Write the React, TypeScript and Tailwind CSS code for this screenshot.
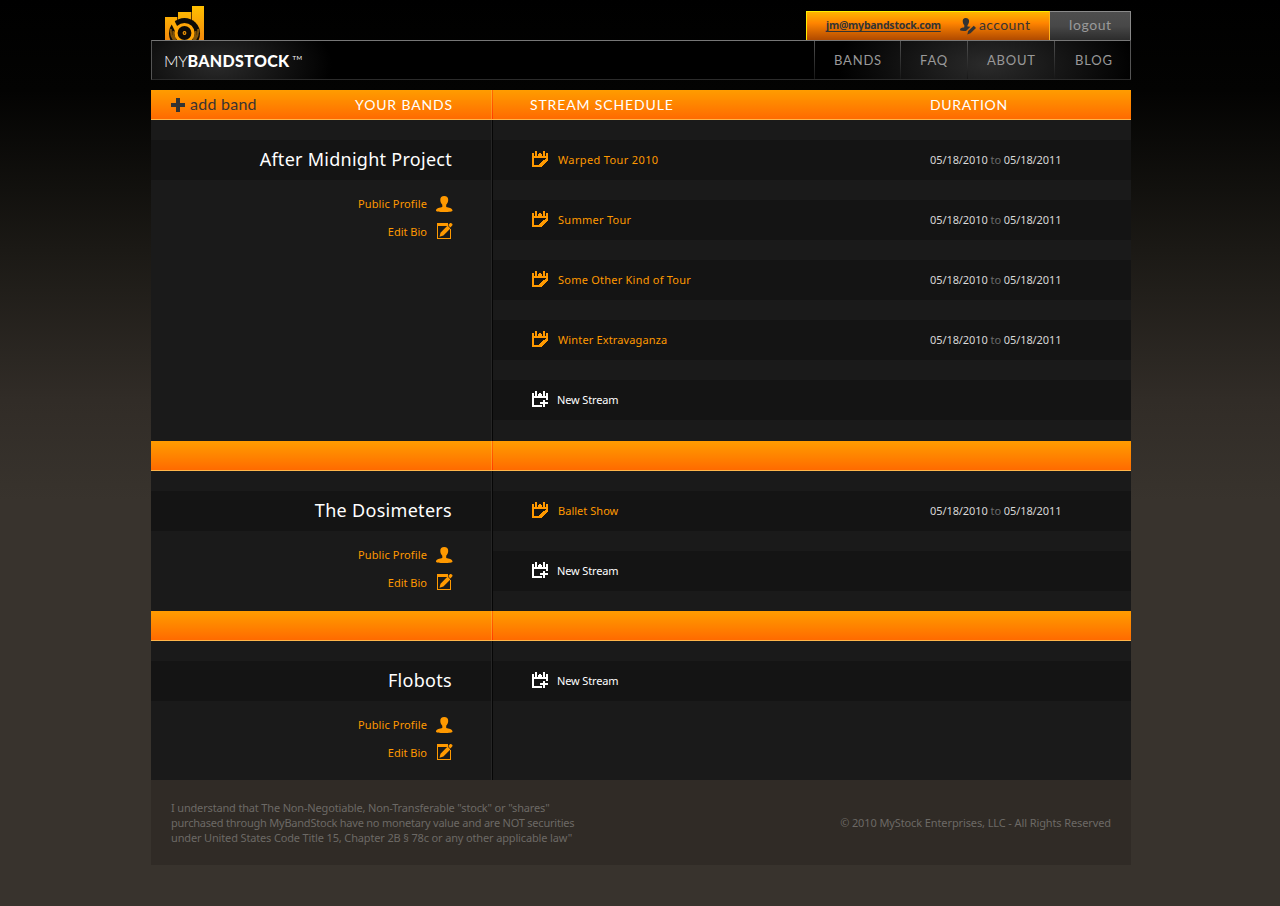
import type { ReactNode } from "react";

const brand = "font-['Lato',sans-serif]";

function Logo() {
  return (
    <svg width="40" height="34" viewBox="0 0 40 34" className="block">
      <defs>
        <linearGradient id="bars" x1="0" y1="0" x2="0" y2="1">
          <stop offset="0" stopColor="#ffc000" />
          <stop offset="1" stopColor="#f58a0c" />
        </linearGradient>
        <clipPath id="barClip">
          <path d="M0 11h12.500V6h13V0H39V34H0z" />
        </clipPath>
      </defs>
      <path d="M0 11h12v23H0zM13 6h13v28H13zM27 0h12v34H27z" fill="url(#bars)" />
      <path d="M12 11h1v23h-1zM26 6h1v28h-1z" fill="#5a3500" />
      <g clipPath="url(#barClip)">
        <circle cx="19.500" cy="27.500" r="15.500" fill="#0d0a06" />
        <path d="M6 23a14 14 0 0 0 3 11M8.500 25a11.500 11.500 0 0 0 2.500 9M33 23a14 14 0 0 1-3 11M30.500 25a11.500 11.500 0 0 1-2.500 9" stroke="#7d520a" strokeWidth="2" fill="none" />
        <path d="M7 14.500l5 10" stroke="#ffab05" strokeWidth="4" />
        <circle cx="19.500" cy="27" r="8.500" fill="#0d0a06" stroke="#ffa506" strokeWidth="3.200" />
        <circle cx="19.500" cy="27" r="1.900" fill="#f79a08" />
        <circle cx="19.500" cy="27" r="0.800" fill="#0d0a06" />
      </g>
    </svg>
  );
}

function CalendarEdit() {
  return (
    <svg width="17" height="17" viewBox="0 0 17 17" shapeRendering="crispEdges" className="mb-[2px] block shrink-0 text-[#ff9900]" fill="currentColor">
      <path d="M0 2h2v3h4V3h4v2h4V2h2v5H0zM3 0h2v5H3zM11 0h2v5h-2zM7 2h2v1H7z" />
      <path d="M0 7h2v9H0zM2 14h5v2H2z" />
      <path d="M14 7h2v3h-1v1h-1v1h-1v1h-1v1h-1v1h-1v1H7v-3h1v-1h1v-1h1v-1h1V9h2V8h1z" />
    </svg>
  );
}

function CalendarAdd() {
  return (
    <svg width="17" height="17" viewBox="0 0 17 17" shapeRendering="crispEdges" className="mb-[2px] block shrink-0 text-white" fill="currentColor">
      <path d="M0 2h2v3h4V3h4v2h4V2h2v5H0zM3 0h2v5H3zM11 0h2v5h-2zM7 2h2v1H7z" />
      <path d="M0 7h2v9H0zM2 14h8v2H2zM14 7h2v2h-2z" />
      <path d="M11 9h2v2h3v2h-3v3h-2v-3H8v-2h3z" />
    </svg>
  );
}

function Person() {
  return (
    <svg width="17" height="17" viewBox="0 0 17 17" className="block shrink-0" fill="#ff9900">
      <path d="M8.200 0C5.600 0 4.200 1.500 4.300 4c.1 2.200.9 3.700 2 4.700V11C4 11.600 0 12 0 14.500 0 15.600 3 16 8.200 16s8.300-.4 8.300-1.500C16.500 12 12.500 11.600 10.200 11V8.700c1.100-1 1.900-2.500 2-4.700.1-2.500-1.400-4-4-4z" />
    </svg>
  );
}

function Compose() {
  return (
    <svg width="17" height="17" viewBox="0 0 17 17" className="mb-[2px] block shrink-0" fill="#ff9900">
      <path d="M1 0h11v3H2v12h12V6h1v10H1z" shapeRendering="crispEdges" />
      <path d="M11.600 2.600l2.800 2.800-7 7-3.900 1.300 1-3.900zM12.300 1.900l1.300-1.400c.8-.7 1.600-.6 2.300 0 .8.800.8 1.600.1 2.300l-1.100 1.300-.8.400z" />
    </svg>
  );
}

function AccountIcon() {
  return (
    <svg width="17" height="17" viewBox="0 0 17 17" className="block shrink-0" fill="#333">
      <path d="M5.700 0C3.500 0 2.600 1.300 2.700 3.300c.1 2 .8 3.100 1.600 3.900v2C2.500 9.800 0 9.800 0 12c0 .7 2.500 1 6 1l4.500-4.200-3-.3V7.200c.8-.8 1.500-2 1.600-3.900C9.200 1.300 8 0 5.700 0z" />
      <path d="M13.800 7.800l2.200 2.100-5.500 5.300-3.200 1.200.9-3.300z" />
    </svg>
  );
}

function Divider({ bright }: { bright?: boolean }) {
  return bright ? (
    <div className="flex w-[2px] shrink-0">
      <div className="w-px bg-linear-to-b from-[#ffad28] to-[#ff8a1c]" />
      <div className="w-px bg-linear-to-b from-[#ff6a00] to-[#ff3a00]" />
    </div>
  ) : (
    <div className="flex w-[2px] shrink-0">
      <div className="w-px bg-[#262626]" />
      <div className="w-px bg-[#060606]" />
    </div>
  );
}

function OrangeBar({ left, right }: { left?: ReactNode; right?: ReactNode }) {
  return (
    <div className="flex h-[30px] border-b border-[#ffb54a] bg-linear-to-b from-[#ff9c00] to-[#ff6a00]">
      <div className="flex w-[340px] items-center justify-between pr-[38px] pl-5">{left}</div>
      <Divider bright />
      <div className="flex flex-1 items-center pl-[37px]">{right}</div>
    </div>
  );
}

type Stream = { name: string; track: string };

function Band({ name, track, streams, height }: { name: string; track: string; streams: Stream[]; height: string }) {
  return (
    <section className={`flex bg-[#1a1a1a] ${height}`}>
      <div className="w-[340px] pt-5">
        <h2 className={`flex h-10 items-center justify-end bg-[#141414] pr-[39px] pb-[2px] text-[18px] text-white ${track}`}>{name}</h2>
        <div className="mt-[10px] flex flex-col items-end pr-[38px] text-[11px] tracking-[0.12px] text-[#ff9900]">
          <a className="flex h-7 items-center gap-[9px]">Public Profile<Person /></a>
          <a className="flex h-7 items-center gap-[9px] tracking-[0]">Edit Bio<Compose /></a>
        </div>
      </div>
      <Divider />
      <div className="flex-1 text-[11px]">
        {streams.map((s) => (
          <div key={s.name} className="mt-5 flex h-10 items-center bg-[#141414] pl-[39px]">
            <div className="flex w-[398px] items-center gap-[9px] text-[#ff9900]">
              <CalendarEdit />
              <span className={s.track}>{s.name}</span>
            </div>
            <span className="tracking-[-0.08px] text-[#d8d8d8]">
              05/18/2010 <span className="text-[#6a6a6a]">to</span> 05/18/2011
            </span>
          </div>
        ))}
        <div className="mt-5 flex h-10 items-center gap-[8px] bg-[#141414] pl-[39px] text-white">
          <CalendarAdd />
          <span className="tracking-[-0.15px]">New Stream</span>
        </div>
      </div>
    </section>
  );
}

const nav = [
  { label: "BANDS", box: "w-[86px] pl-[19px]" },
  { label: "FAQ", box: "w-[67px] pl-[19px]" },
  { label: "ABOUT", box: "w-[87px] pl-[19px]" },
  { label: "BLOG", box: "w-[76px] pl-[20px]" },
];

export default function App() {
  return (
    <div className="h-[906px] w-[1280px] overflow-hidden bg-[#38332d] bg-[linear-gradient(180deg,#000_0px,#030302_90px,#1b1915_250px,#312c27_400px,#38332d_500px)] pl-[151px] font-['Noto_Sans','Open_Sans',sans-serif]">
      <div className="w-[980px]">
        <header>
          <div className="flex h-10 items-end justify-between">
            <div className="pl-[14px]"><Logo /></div>
            <div className="flex h-[29px]">
              <div className="flex w-[244px] items-center border-t border-l border-[#ffee00] border-r border-r-[#ffb01a] bg-linear-to-b from-[#ffb400] via-[#ff8400] via-40% to-[#b04a00] pl-[19px]">
                <a className="w-[134px] text-[10.5px] font-bold tracking-[-0.23px] text-[#333] underline underline-offset-2">jm@mybandstock.com</a>
                <AccountIcon />
                <span className={`${brand} mb-[3px] ml-[2px] text-[14px] tracking-[0.4px] text-[#3a3330]`}>account</span>
              </div>
              <div className={`${brand} flex w-[81px] items-center border-t border-r border-[#8a8a8a] bg-linear-to-b from-[#4e4e4e] via-[#484848] to-[#2c2c2c] pb-[3px] pl-[19px] text-[14px] tracking-[0.6px] text-[#9a9a9a]`}>logout</div>
            </div>
          </div>
          <div className="flex h-10 justify-between border border-t-[#777] border-r-[#555] border-b-[#2b2b2b] border-l-[#555] bg-black bg-[radial-gradient(ellipse_115px_60px_at_65px_24px,#2a2a2a,transparent),radial-gradient(ellipse_150px_70px_at_835px_24px,#2b2b2b,transparent)]">
            <div className={`${brand} flex items-center pt-px pl-[12px] text-white`}>
              <span className="text-[16px] font-light tracking-[-0.3px]">MY</span>
              <span className="text-[16px] font-black tracking-[0.35px]">BANDSTOCK</span>
              <span className="mb-[6px] ml-[3px] text-[6px] tracking-[0.3px]">TM</span>
            </div>
            <nav className={`${brand} flex text-[13px] tracking-[0.8px] text-[#999]`}>
              {nav.map((n) => (
                <a key={n.label} className={`flex items-center border-l border-transparent pt-[2px] [border-image:linear-gradient(#555,#333,#151515)_1] ${n.box}`}>{n.label}</a>
              ))}
            </nav>
          </div>
        </header>
        <main className="mt-[10px]">
          <OrangeBar
            left={
              <>
                <span className={`${brand} flex items-center gap-[5px] text-[16px] tracking-[0.25px] text-[#3a3330]`}>
                  <svg width="14" height="14" className="block" fill="#333"><path d="M5 0h4v5h5v4H9v5H5V9H0V5h5z" /></svg>
                  <span className="mb-[2px]">add band</span>
                </span>
                <span className={`${brand} text-[14px] tracking-[0.85px] text-white`}>YOUR BANDS</span>
              </>
            }
            right={
              <>
                <span className={`${brand} w-[400px] text-[14px] tracking-[0.87px] text-white`}>STREAM SCHEDULE</span>
                <span className={`${brand} text-[14px] tracking-[0.7px] text-white`}>DURATION</span>
              </>
            }
          />
          <Band
            name="After Midnight Project"
            track="tracking-[0.27px]"
            height="h-[321px]"
            streams={[
              { name: "Warped Tour 2010", track: "tracking-[0.36px]" },
              { name: "Summer Tour", track: "tracking-[0.28px]" },
              { name: "Some Other Kind of Tour", track: "tracking-[0.23px]" },
              { name: "Winter Extravaganza", track: "tracking-[0.14px]" },
            ]}
          />
          <OrangeBar />
          <Band name="The Dosimeters" track="tracking-[0.3px]" height="h-[140px]" streams={[{ name: "Ballet Show", track: "tracking-[0.03px]" }]} />
          <OrangeBar />
          <Band name="Flobots" track="tracking-[0.3px]" height="h-[139px]" streams={[]} />
        </main>
        <footer className="flex h-[85px] items-center justify-between bg-[#302b26] px-5 text-[11px] leading-[15px] text-[#6c6965]">
          <p className="whitespace-nowrap">
            <span className="tracking-[-0.165px]">I understand that The Non-Negotiable, Non-Transferable "stock" or "shares"</span><br />
            <span className="tracking-[-0.22px]">purchased through MyBandStock have no monetary value and are NOT securities</span><br />
            <span className="tracking-[-0.15px]">under United States Code Title 15, Chapter 2B § 78c or any other applicable law"</span>
          </p>
          <p className="tracking-[-0.11px]">© 2010 MyStock Enterprises, LLC - All Rights Reserved</p>
        </footer>
      </div>
    </div>
  );
}
